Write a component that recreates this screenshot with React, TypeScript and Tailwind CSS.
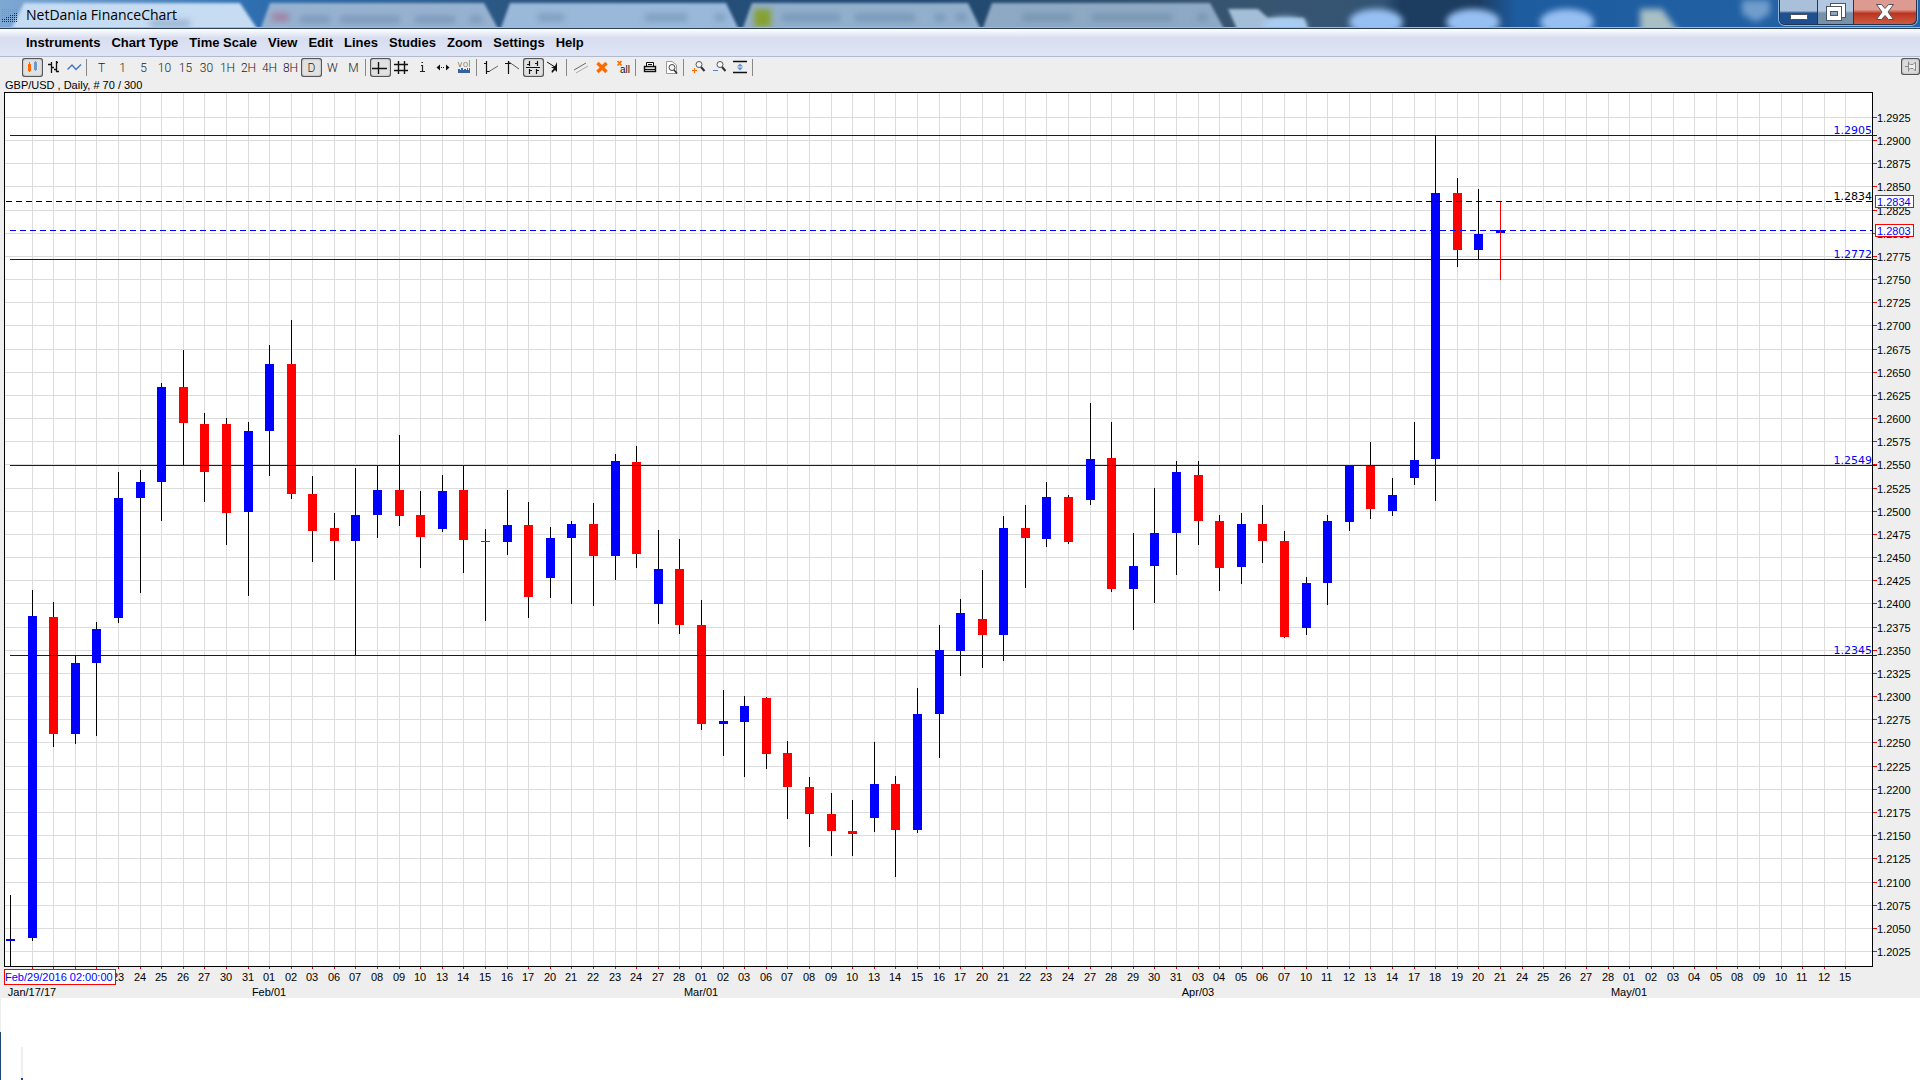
import React from "react";

type Candle = [high: number, top: number, bottom: number, low: number, up: 0 | 1];

const CANDLES: Candle[] = [
  [895, 939, 941, 966, 1], [590, 616, 938, 941, 1], [602, 617, 734, 747, 0], [656, 663, 734, 744, 1],
  [622, 629, 663, 736, 1], [472, 498, 618, 623, 1], [470, 482, 498, 593, 1], [383, 387, 482, 521, 1],
  [350, 387, 423, 465, 0], [413, 424, 472, 502, 0], [418, 424, 513, 545, 0], [422, 431, 512, 596, 1],
  [345, 364, 431, 476, 1], [320, 364, 494, 499, 0], [476, 494, 531, 562, 0], [513, 528, 541, 580, 0],
  [468, 515, 541, 655, 1], [466, 490, 515, 538, 1], [435, 490, 516, 526, 0], [491, 515, 537, 568, 0],
  [475, 491, 529, 532, 1], [466, 490, 540, 573, 0], [529, 541, 542, 621, 0], [490, 525, 542, 555, 1],
  [502, 525, 597, 618, 0], [527, 538, 578, 598, 1], [521, 524, 538, 604, 1], [503, 524, 556, 606, 0],
  [454, 461, 556, 580, 1], [446, 462, 554, 568, 0], [530, 569, 604, 624, 1], [539, 569, 625, 634, 0],
  [600, 625, 724, 730, 0], [690, 721, 724, 756, 1], [696, 706, 722, 777, 1], [697, 698, 754, 769, 0],
  [741, 753, 787, 819, 0], [777, 787, 814, 847, 0], [793, 814, 831, 856, 0], [800, 831, 834, 856, 0],
  [742, 784, 818, 832, 1], [776, 784, 830, 877, 0], [688, 714, 830, 833, 1], [625, 650, 714, 758, 1],
  [599, 613, 651, 676, 1], [570, 619, 635, 668, 0], [516, 528, 635, 661, 1], [505, 528, 538, 588, 0],
  [482, 497, 539, 547, 1], [495, 497, 542, 544, 0], [403, 459, 500, 505, 1], [422, 458, 589, 592, 0],
  [533, 566, 589, 630, 1], [488, 533, 566, 603, 1], [461, 472, 533, 575, 1], [461, 475, 521, 545, 0],
  [515, 521, 568, 591, 0], [513, 524, 567, 584, 1], [505, 524, 541, 563, 0], [531, 541, 637, 638, 0],
  [577, 583, 628, 635, 1], [515, 521, 583, 605, 1], [465, 465, 522, 531, 1], [442, 465, 509, 519, 0],
  [478, 495, 511, 516, 1], [422, 460, 478, 485, 1], [135, 193, 459, 501, 1], [178, 193, 250, 267, 0],
  [189, 234, 250, 259, 1],
];

const DAYS = (
  "23 24 25 26 27 30 31 01 02 03 06 07 08 09 10 13 14 15 16 17 20 21 22 23 24 27 28 " +
  "01 02 03 06 07 08 09 10 13 14 15 16 17 20 21 22 23 24 27 28 29 30 31 " +
  "03 04 05 06 07 10 11 12 13 14 17 18 19 20 21 24 25 26 27 28 01 02 03 04 05 08 09 10 11 12 15"
).split(" ");

const MONTHS: [number, string][] = [[1, "Jan/17/17"], [12, "Feb/01"], [32, "Mar/01"], [55, "Apr/03"], [75, "May/01"]];

const LEVELS: { y: number; label: string }[] = [
  { y: 135, label: "1.2905" },
  { y: 259, label: "1.2772" },
  { y: 465, label: "1.2549" },
  { y: 655, label: "1.2345" },
];

const xAt = (i: number) => Math.round(10.01 + i * 21.593);
const GRID_Y = Array.from({ length: 37 }, (_, k) => Math.floor(117.4 + k * 23.17));

function Chart() {
  return (
    <svg
      viewBox="0 92 1920 906"
      className="block h-auto w-full font-['Liberation_Sans',sans-serif] text-[11px]"
      shapeRendering="crispEdges"
      role="img"
      aria-label="GBP/USD daily candlestick chart"
    >
      <rect x="4" y="92" width="1869" height="875" fill="#000" />
      <rect x="5" y="93" width="1867" height="873" fill="#fff" />
      {GRID_Y.map((y, k) => (
        <g key={y}>
          <rect x="5" y={y} width="1867" height="1" fill="#dcdcdc" />
          <rect x="1873" y={y} width="4" height="1" fill="#f00" />
          <text x="1877" y={y + 5}>{(1.2925 - k * 0.0025).toFixed(4)}</text>
        </g>
      ))}
      {Array.from({ length: 85 }, (_, k) => xAt(k + 1)).map((x) => (
        <g key={x}>
          <rect x={x} y="93" width="1" height="873" fill="#dcdcdc" />
          <rect x={x} y="967" width="1" height="2" fill="#f00" />
        </g>
      ))}
      {CANDLES.map(([high, top, bottom, low, up], i) => (
        <g key={i}>
          <rect x={xAt(i)} y={high} width="1" height={low - high} fill="#000" />
          <rect x={xAt(i) - 4} y={top} width="9" height={bottom - top} fill={up ? "#00f" : "#f00"} />
        </g>
      ))}
      <rect x={xAt(69) - 4} y="230" width="9" height="3" fill="#00f" />
      <rect x={xAt(69)} y="201" width="1" height="79" fill="#f00" />

      {LEVELS.map(({ y, label }) => (
        <g key={label} fill="#00f">
          <rect x="10" y={y} width="1867" height="1" />
          <text x="1872" y={y - 1} textAnchor="end" className="font-['DejaVu_Sans',sans-serif]">{label}</text>
        </g>
      ))}
      <path d="M6 201.5H1872" stroke="#000" strokeDasharray="6 4" />
      <text x="1872" y="200" textAnchor="end" className="font-['DejaVu_Sans',sans-serif]">1.2834</text>
      <path d="M10 230.5H1872" stroke="#00f" strokeDasharray="6 4" />

      <g fill="#fff" stroke="#f00">
        <rect x="1875.5" y="195.5" width="38" height="12" />
        <rect x="1875.5" y="224.5" width="38" height="12" />
      </g>
      <g fill="#00f">
        <text x="1877" y="206">1.2834</text>
        <text x="1877" y="235">1.2803</text>
      </g>

      {DAYS.map((d, k) => (
        <text key={k} x={xAt(k + 5) - 6} y="981">{d}</text>
      ))}
      {MONTHS.map(([i, label]) => (
        <text key={label} x={xAt(i)} y="996" textAnchor="middle">{label}</text>
      ))}
      <rect x="4.5" y="969.5" width="111" height="15" fill="#fff" stroke="#f00" />
      <text x="5" y="981" fill="#00f">Feb/29/2016 02:00:00</text>
    </svg>
  );
}

function TitleBackdrop() {
  const glyphs = [
    [150, 20, 40], [272, 14, 18], [300, 16, 30], [340, 16, 60], [415, 16, 40], [470, 16, 12], [538, 14, 26], [645, 14, 42],
    [715, 14, 10], [782, 14, 58], [855, 14, 60], [935, 14, 10], [956, 14, 10], [1022, 14, 50], [1092, 14, 80], [1197, 14, 10],
  ];
  return (
    <svg className="absolute inset-0 h-full w-full" viewBox="0 0 1920 29" preserveAspectRatio="none" aria-hidden="true">
      <defs>
        <filter id="soft" x="-20%" y="-50%" width="140%" height="200%"><feGaussianBlur stdDeviation="3" /></filter>
        <filter id="edge" x="-5%" y="-30%" width="110%" height="160%"><feGaussianBlur stdDeviation="1.5" /></filter>
        <linearGradient id="sky" x1="0" x2="1">
          <stop offset="0" stopColor="#7fa8d4" />
          <stop offset=".13" stopColor="#2f6fb0" />
          <stop offset=".27" stopColor="#2b5580" />
          <stop offset=".48" stopColor="#1f4770" />
          <stop offset=".65" stopColor="#38556f" />
          <stop offset=".72" stopColor="#335474" />
          <stop offset=".73" stopColor="#1c3c60" />
          <stop offset=".77" stopColor="#1c3c60" />
          <stop offset=".79" stopColor="#1e5ca0" />
          <stop offset="1" stopColor="#2463a6" />
        </linearGradient>
      </defs>
      <rect width="1920" height="29" fill="url(#sky)" />
      <g filter="url(#edge)">
        <path d="M8 36L24 3H240L262 36Z" fill="#c6dcf2" />
        <path d="M258 36L270 3H484L502 36Z" fill="#97b2d0" />
        <path d="M498 36L510 3H726L742 36Z" fill="#9ab8d9" />
        <path d="M740 36L752 3H968L984 36Z" fill="#92afcc" />
        <path d="M980 36L992 3H1210L1228 36Z" fill="#8ea9c4" />
        <path d="M1228 9H1258L1268 18H1304L1310 36H1240Z" fill="#a5bed8" />
      </g>
      <g filter="url(#soft)">
        {glyphs.map(([x, y, w]) => (
          <rect key={x} x={x} y={y} width={w} height="7" fill="#4f7096" opacity=".4" />
        ))}
        <rect x="272" y="13" width="16" height="8" fill="#c06a90" opacity=".6" />
        <rect x="754" y="9" width="17" height="18" fill="#86a02e" />
        <ellipse cx="1285" cy="26" rx="22" ry="9" fill="#a9cdf3" />
        <ellipse cx="1376" cy="22" rx="27" ry="13" fill="#97c0f2" />
        <ellipse cx="1473" cy="22" rx="27" ry="13" fill="#97c0f2" />
        <ellipse cx="1567" cy="22" rx="27" ry="13" fill="#97c0f2" />
        <path d="M1640 9H1662L1680 34H1640Z" fill="#a8bfc4" />
        <path d="M1742 0H1770V14L1756 22L1742 14Z" fill="#6f9dcc" />
      </g>
      <rect y="27" width="1920" height="1" fill="#9dbbd8" />
      <rect y="28" width="1920" height="1" fill="#2a3f5c" />
    </svg>
  );
}

function TitleBar() {
  return (
    <header className="relative h-[29px] overflow-hidden">
      <TitleBackdrop />
      <div className="relative flex h-full items-start justify-between pl-0.5 pr-[3px]">
        <div className="flex items-center gap-2 pt-1">
          <svg width="16" height="16" viewBox="0 0 16 16" aria-hidden="true" shapeRendering="crispEdges">
            {Array.from({ length: 8 }, (_, c) =>
              Array.from({ length: 7 }, (_, r) => (
                <rect key={c + "-" + r} x={c * 2} y={r * 2 + 2} width="1" height="1" fill={r + c / 2 > 4.5 ? "#1d2c3c" : "#7d94ad"} />
              )),
            )}
          </svg>
          <h1 className="font-['Open_Sans',sans-serif] text-[14px] leading-[21px] text-black">NetDania FinanceChart</h1>
        </div>
        <div className="flex h-[25px] rounded-b-md border border-t-0 border-[#22364e] shadow-[0_0_0_1px_rgba(190,215,240,0.7)]">
          <button aria-label="Minimize" className="flex w-[38px] justify-center rounded-bl-md border-r border-[#22364e] bg-linear-to-b from-[#a9bfda] from-45% to-[#1f4f8f] to-55%">
            <svg width="18" height="22" aria-hidden="true"><rect x=".5" y="14.5" width="17" height="5" rx="1" fill="#fff" stroke="#4a4f60" /></svg>
          </button>
          <button aria-label="Restore" className="flex w-[36px] justify-center border-r border-[#22364e] bg-linear-to-b from-[#b3c8e0] from-45% to-[#7692a8] to-55%">
            <svg width="20" height="22" aria-hidden="true" fill="#fff" stroke="#4a5568">
              <rect x="4.5" y="3.5" width="15" height="14" />
              <rect x=".5" y="6.5" width="15" height="14" />
              <rect x="4.5" y="11.5" width="7" height="4" fill="#8ea5bd" />
            </svg>
          </button>
          <button aria-label="Close" className="flex w-[62px] justify-center rounded-br-md bg-linear-to-b from-[#dc9a90] from-40% via-[#bb3320] via-55% to-[#cf5a40]">
            <svg width="20" height="22" aria-hidden="true">
              <path d="M1.500 4.500H6.500L10 8.500L13.500 4.500H18.500L13 12L18.500 19.500H13.500L10 15.500L6.500 19.500H1.500L7 12Z" fill="#fff" stroke="#50505e" />
            </svg>
          </button>
        </div>
      </div>
    </header>
  );
}

const MENUS = ["Instruments", "Chart Type", "Time Scale", "View", "Edit", "Lines", "Studies", "Zoom", "Settings", "Help"];

function MenuBar() {
  return (
    <nav className="flex h-7 items-center gap-[11px] border-b border-[#b3b9cf] bg-linear-to-b from-white via-[#d8deef] via-33% to-[#dfe4f6] pl-[26px] font-['Liberation_Sans',sans-serif] text-[13px] font-bold leading-4 text-black">
      {MENUS.map((m) => (
        <button key={m} className="whitespace-nowrap">{m}</button>
      ))}
    </nav>
  );
}

const Glyph = ({ children }: { children: React.ReactNode }) => (
  <svg width="21" height="19" viewBox="0 0 21 19" fill="none" stroke="#111" aria-hidden="true" className="block shrink-0">
    {children}
  </svg>
);

const lens = (
  <>
    <circle cx="11" cy="6.500" r="3" fill="#f4f8fc" stroke="#555" />
    <path d="M13 9L16.500 13" stroke="#333" strokeWidth="2" />
  </>
);

const GROUPS: { name: string; on?: boolean; icon?: React.ReactNode }[][] = [
  [
    { name: "Candlesticks", on: true, icon: <><path d="M7.500 4V14" stroke="#ff6a00" /><rect x="6" y="6" width="3" height="7" fill="#ff6a00" stroke="none" /><path d="M13.500 3V13" stroke="#6a9bd2" /><rect x="12" y="4" width="3" height="8" fill="#6a9bd2" stroke="none" /></> },
    { name: "Bars", icon: <path d="M8.500 4V15M5 6.500H8M8 9.500H11M13.500 3V14M11 11.500H13M13 4.500H15M13 13.500H16" strokeWidth="1.300" /> },
    { name: "Line", icon: <path d="M3.500 11.500L8 7L12 11.500L17 6.500" stroke="#3f74c0" strokeWidth="1.400" /> },
  ],
  ["T", "1", "5", "10", "15", "30", "1H", "2H", "4H", "8H", "D", "W", "M"].map((name) => ({ name, on: name === "D" })),
  [
    { name: "Crosshair", on: true, icon: <path d="M2 10.500H17M8.500 4V16" strokeWidth="1.400" /> },
    { name: "Grid", icon: <path d="M7.500 3V16M13.500 3V16M3 6.500H17M3 12.500H17" strokeWidth="1.400" /> },
    { name: "Info", icon: <path d="M9 7.500H10.500V13.500M8 13.500H13M9.500 4.500H11" strokeWidth="1.200" stroke="#222" /> },
    { name: "Scroll", icon: <><path d="M7 6.500V12.500L3.500 9.500ZM13 6.500V12.500L16.500 9.500Z" fill="#111" stroke="none" /><path d="M8 9.500H12" strokeDasharray="1 1" /></> },
    { name: "Volume", icon: <><text x="10" y="9" textAnchor="middle" fill="#111" stroke="none" className="font-['DejaVu_Sans',sans-serif] text-[9px]">vol</text><path d="M4 15V11H6V12H7V10H9V12H10V11H12V12H13V10H14V12H15V10H16V15Z" fill="#3a5fa0" stroke="none" /></> },
  ],
  [
    { name: "Trend line up", icon: <><path d="M5.500 3V16M3 5.500H5M5 13.500H9" strokeWidth="1.200" /><path d="M8 13.500L17 8" stroke="#666" /></> },
    { name: "Trend line down", icon: <><path d="M6.500 3V16M3 5.500H6M6 5.500H9" strokeWidth="1.200" /><path d="M7 4L17 11" stroke="#555" /></> },
    { name: "Channel", on: true, icon: <path d="M3 9.500H17M6.500 3V8M14.500 3V8M4 6.500H6M12 5.500H14M6.500 11V16M13.500 11V16M6 12.500H9M13 12.500H16" strokeWidth="1.200" /> },
    { name: "Snap", icon: <><path d="M3 4L11 9" /><path d="M13 4V14L11 12L8 15L7.500 13L10 10.500L7 9.500L11 8Z" fill="#111" stroke="none" /></> },
  ],
  [
    { name: "Parallel lines", icon: <><path d="M3 12L15 5" stroke="#666" /><path d="M5 15L17 8" stroke="#aaa" /></> },
    { name: "Delete line", icon: <path d="M5.500 5L14.500 14M14.500 5L5.500 14" stroke="#ff6a00" strokeWidth="3.400" /> },
    { name: "Delete all lines", icon: <><path d="M4.500 3L8.500 7.500M8.500 3L4.500 7.500" stroke="#ff6a00" strokeWidth="1.600" /><text x="7" y="15" fill="#111" stroke="none" className="font-['Liberation_Sans',sans-serif] text-[10px]">all</text></> },
  ],
  [
    { name: "Print", icon: <><path d="M6.500 8.500V4.500H13.500V8.500M8 6.500H12" fill="#fff" /><rect x="4.500" y="8.500" width="11" height="5" fill="#ddd" strokeWidth="1.400" /><path d="M5 11.500H15" /></> },
    { name: "Print preview", icon: <><path d="M5.500 3.500H11L15.500 7V15.500H5.500Z" fill="#fff" stroke="#999" /><circle cx="11" cy="9.500" r="3" stroke="#444" fill="#eef4fa" /><path d="M13 12L16 15.500" stroke="#333" strokeWidth="1.600" /></> },
  ],
  [
    { name: "Zoom in", icon: <>{lens}<path d="M4 12.500H9M6.500 10V15" stroke="#ff6a00" /></> },
    { name: "Zoom out", icon: <>{lens}<path d="M4 12.500H9" stroke="#4a86c8" /></> },
    { name: "Fit vertically", icon: <><path d="M3 3.500H17M3 14.500H17" strokeWidth="1.400" /><path d="M10 5.500L13 8.500H7ZM10 12.500L13 9.500H7Z" fill="#5f93cf" stroke="none" /></> },
  ],
];

function Toolbar() {
  return (
    <div role="toolbar" aria-label="Chart tools" className="flex items-start justify-between pl-[22px] pt-px">
      <div className="flex items-center">
        {GROUPS.map((group, g) => (
          <React.Fragment key={g}>
            {group.map(({ name, on, icon }) => (
              <button
                key={name}
                aria-label={name}
                aria-pressed={!!on}
                className={
                  "flex h-[19px] w-[21px] items-center justify-center rounded-[3px] font-['Roboto',sans-serif] text-[12px] font-light leading-none text-[#222] " +
                  (on ? "bg-[#e2e2e2] shadow-[inset_0_0_0_1px_#555,inset_0_0_2px_1px_#999]" : "")
                }
              >
                {icon ? <Glyph>{icon}</Glyph> : name}
              </button>
            ))}
            <span className="ml-px mr-1 h-[17px] w-px bg-[#888]" />
          </React.Fragment>
        ))}
      </div>
      <button aria-label="Pin window" className="flex h-[17px] w-[19px] items-center justify-center rounded-[3px] bg-[#dcdcdc] shadow-[inset_0_0_0_1px_#555,inset_0_0_2px_1px_#999]">
        <svg width="12" height="11" viewBox="0 0 12 11" fill="#eee" stroke="#888" aria-hidden="true">
          <path d="M0 5.500H3.500M3.500 .5V10.500M3.500 2.500L5.500 3.500H8L10.500 1V10L8 7.500H5.500L3.500 8.500" />
        </svg>
      </button>
    </div>
  );
}

export default function App() {
  return (
    <div className="flex min-h-screen flex-col bg-white">
      <TitleBar />
      <MenuBar />
      <main className="bg-[#eee]">
        <Toolbar />
        <p className="h-[15px] pl-[5px] font-['Liberation_Sans',sans-serif] text-[11px] leading-4 text-black">GBP/USD , Daily, # 70 / 300</p>
        <Chart />
      </main>
      <div className="flex flex-1">
        <div className="flex w-px flex-col">
          <div className="h-[34px] bg-[#eee]" />
          <div className="flex-1 bg-[#1f4470]" />
        </div>
        <div className="ml-5 mt-[49px] flex w-0.5 flex-col">
          <div className="flex-1 bg-[#eee]" />
          <div className="h-0.5 bg-[#1f4470]" />
        </div>
      </div>
    </div>
  );
}
